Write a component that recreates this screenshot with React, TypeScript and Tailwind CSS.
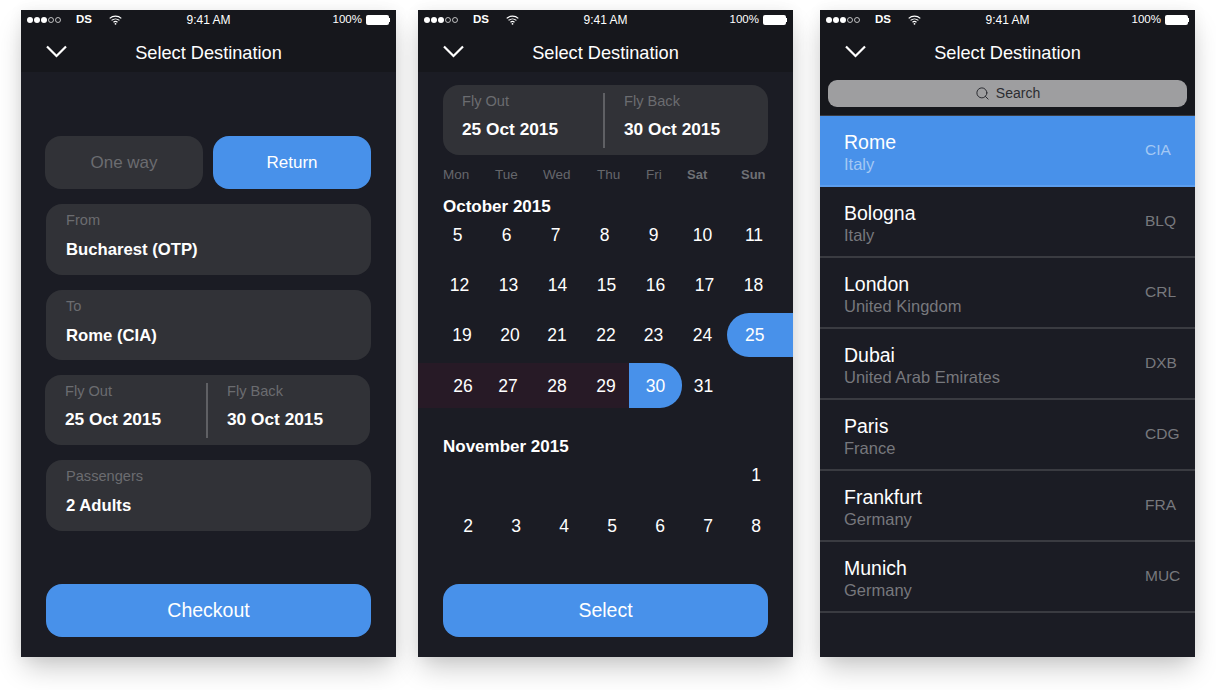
import { Search } from "lucide-react";

const font = { fontFamily: '"Liberation Sans", Arial, sans-serif' };

function StatusBar() {
  return (
    <div className="flex h-5 items-center justify-between pl-[6px] pr-[6px] text-[12px] text-white">
      <div className="flex flex-1 items-center">
        <div className="flex gap-[1px]">
          <span className="h-[6px] w-[6px] rounded-full bg-white" />
          <span className="h-[6px] w-[6px] rounded-full bg-white" />
          <span className="h-[6px] w-[6px] rounded-full bg-white" />
          <span className="h-[6px] w-[6px] rounded-full border border-white/70" />
          <span className="h-[6px] w-[6px] rounded-full border border-white/70" />
        </div>
        <span className="ml-[15px] text-[11.5px] font-bold">DS</span>
        <svg className="ml-[17px]" width="13" height="10" viewBox="0 0 13 10" fill="none" stroke="white" strokeWidth="1.2">
          <path d="M0.7 3.4C4 0.4 9 0.4 12.3 3.4" />
          <path d="M2.6 5.4C4.8 3.5 8.2 3.5 10.4 5.4" />
          <path d="M4.5 7.3C5.6 6.4 7.4 6.4 8.5 7.3" />
          <circle cx="6.5" cy="8.8" r="0.9" fill="white" stroke="none" />
        </svg>
      </div>
      <span className="text-[12px]">9:41 AM</span>
      <div className="flex flex-1 items-center justify-end">
        <span className="text-[11.5px]">100%</span>
        <span className="ml-1 h-[10px] w-[23px] rounded-[2px] bg-white" />
        <span className="h-[4px] w-[1px] bg-white" />
      </div>
    </div>
  );
}

function NavTitle() {
  return (
    <div className="relative flex h-[42px] items-center justify-center pt-[6px]">
      <svg
        className="absolute left-[25px] top-[15px]"
        width="21"
        height="13"
        viewBox="0 0 21 13"
        fill="none"
        stroke="white"
        strokeWidth="2.2"
      >
        <path d="M1 1.5L10.5 11L20 1.5" />
      </svg>
      <span className="text-[18.2px] text-white">Select Destination</span>
    </div>
  );
}

function Field({ label, value, className }: { label: string; value: string; className: string }) {
  return (
    <div className={`flex w-[325px] flex-col rounded-[16px] bg-[#313237] pl-[20px] pt-[6px] ${className}`}>
      <span className="text-[14.6px] leading-[20px] text-[#6b6c70]">{label}</span>
      <span className="mt-[10px] text-[16.7px] font-bold leading-[20px] text-white">{value}</span>
    </div>
  );
}

function DatesCard({ first }: { first: string }) {
  return (
    <div className="flex h-[70px] w-[325px] items-center rounded-[16px] bg-[#313237]">
      <div className={`flex h-full flex-col pt-[6px] ${first}`}>
        <span className="text-[14.6px] leading-[20px] text-[#6b6c70]">Fly Out</span>
        <span className="mt-[8px] text-[17.3px] font-bold leading-[20px] text-white">25 Oct 2015</span>
      </div>
      <div className="h-[55px] w-[2px] bg-[#5f6064]" />
      <div className="flex h-full flex-col pl-[19px] pt-[6px]">
        <span className="text-[14.6px] leading-[20px] text-[#6b6c70]">Fly Back</span>
        <span className="mt-[8px] text-[17.3px] font-bold leading-[20px] text-white">30 Oct 2015</span>
      </div>
    </div>
  );
}

function Day({ children, className = "" }: { children?: React.ReactNode; className?: string }) {
  return <div className={`flex items-center justify-center text-[17.5px] text-white ${className}`}>{children}</div>;
}

function Screen({ children }: { children: React.ReactNode }) {
  return (
    <div className="flex h-[647px] w-[375px] shrink-0 flex-col overflow-hidden bg-[#1b1c24] shadow-[0_14px_26px_-4px_rgba(0,0,0,0.22),0_0_14px_rgba(0,0,0,0.06)]">
      {children}
    </div>
  );
}

function Header() {
  return (
    <div className="bg-[#16171c]">
      <StatusBar />
      <NavTitle />
    </div>
  );
}

function BookingScreen() {
  return (
    <Screen>
      <Header />
      <div className="flex flex-1 flex-col pl-[25px] pt-[64px]">
        <div className="-ml-[1px] flex gap-[10px] pb-[15px]">
          <div className="flex h-[53px] w-[158px] items-center justify-center rounded-[16px] bg-[#313237] pt-[1px] text-[17px] text-[#6b6c70]">
            One way
          </div>
          <div className="flex h-[53px] w-[158px] items-center justify-center rounded-[16px] bg-[#4891ea] pt-[1px] text-[17px] text-white">
            Return
          </div>
        </div>
        <div className="flex flex-col gap-[15px]">
          <Field label="From" value="Bucharest (OTP)" className="h-[71px]" />
          <Field label="To" value="Rome (CIA)" className="h-[70px]" />
          <div className="-ml-[1px]">
            <DatesCard first="w-[161px] pl-[20px]" />
          </div>
          <Field label="Passengers" value="2 Adults" className="h-[71px]" />
        </div>
        <div className="mt-[53px] flex h-[53px] w-[325px] items-center justify-center rounded-[16px] bg-[#4891ea] pt-[1px] text-[19.5px] text-white">
          Checkout
        </div>
      </div>
    </Screen>
  );
}

function CalendarScreen() {
  return (
    <Screen>
      <Header />
      <div className="flex flex-1 flex-col">
        <div className="pl-[25px] pt-[13px]">
          <DatesCard first="w-[160px] pl-[19px]" />
        </div>
        <div className="mt-[10px] flex h-[20px] items-center pl-[25px] text-[13.5px] text-[#66676c]">
          <span className="w-[52px]">Mon</span>
          <span className="w-[48px]">Tue</span>
          <span className="w-[54px]">Wed</span>
          <span className="w-[49px]">Thu</span>
          <span className="w-[41px]">Fri</span>
          <span className="w-[54px] text-[13px] font-bold text-[#6f7075]">Sat</span>
          <span className="text-[13px] font-bold text-[#6f7075]">Sun</span>
        </div>
        <div className="mt-[12px] pl-[25px] text-[17px] font-bold leading-[20px] text-white">October 2015</div>

        <div className="mt-[-4px] flex h-[45px] pl-[15px]">
          <Day className="w-[49px]">5</Day>
          <Day className="w-[49px]">6</Day>
          <Day className="w-[49px]">7</Day>
          <Day className="w-[49px]">8</Day>
          <Day className="w-[49px]">9</Day>
          <Day className="w-[49px]">10</Day>
          <Day className="w-[49px] pl-[5px]">11</Day>
        </div>
        <div className="mt-[5px] flex h-[45px] pl-[17px]">
          <Day className="w-[49px]">12</Day>
          <Day className="w-[49px]">13</Day>
          <Day className="w-[49px]">14</Day>
          <Day className="w-[49px]">15</Day>
          <Day className="w-[49px]">16</Day>
          <Day className="w-[49px]">17</Day>
          <Day className="w-[49px]">18</Day>
        </div>
        <div className="mt-[5px] flex h-[44px] pl-[15px]">
          <Day className="w-[49px] pl-[9px] pt-[1px]">19</Day>
          <Day className="w-[49px] pl-[7px] pt-[1px]">20</Day>
          <Day className="w-[49px] pl-[3px] pt-[1px]">21</Day>
          <Day className="w-[49px] pl-[3px] pt-[1px]">22</Day>
          <Day className="w-[49px] pt-[1px]">23</Day>
          <Day className="w-[49px] pt-[1px]">24</Day>
          <Day className="w-[66px] justify-start rounded-l-[22px] bg-[#4891ea] pl-[18px] pt-[1px]">25</Day>
        </div>
        <div className="mt-[6px] flex h-[45px]">
          <div className="flex w-[211px] bg-[#271a26] pl-[15px]">
            <Day className="w-[49px] pl-[11px] pt-[1px]">26</Day>
            <Day className="w-[49px] pl-[3px] pt-[1px]">27</Day>
            <Day className="w-[49px] pl-[3px] pt-[1px]">28</Day>
            <Day className="w-[49px] pl-[3px] pt-[1px]">29</Day>
          </div>
          <Day className="w-[53px] rounded-r-[22px] bg-[#4891ea] pt-[1px]">30</Day>
          <Day className="w-[43px] pt-[1px]">31</Day>
        </div>

        <div className="mt-[29px] pl-[25px] text-[17px] font-bold leading-[20px] text-white">November 2015</div>
        <div className="mt-[-4px] flex h-[45px] justify-end pr-[28px]">
          <Day className="w-[18px]">1</Day>
        </div>
        <div className="mt-[6px] flex h-[45px] pl-[26px]">
          {[2, 3, 4, 5, 6, 7, 8].map((d) => (
            <Day key={d} className="w-[48px]">
              {d}
            </Day>
          ))}
        </div>
        <div className="ml-[25px] mt-[35px] flex h-[53px] w-[325px] items-center justify-center rounded-[16px] bg-[#4891ea] pt-[1px] text-[19.5px] text-white">
          Select
        </div>
      </div>
    </Screen>
  );
}

const airports = [
  { city: "Rome", country: "Italy", code: "CIA" },
  { city: "Bologna", country: "Italy", code: "BLQ" },
  { city: "London", country: "United Kingdom", code: "CRL" },
  { city: "Dubai", country: "United Arab Emirates", code: "DXB" },
  { city: "Paris", country: "France", code: "CDG" },
  { city: "Frankfurt", country: "Germany", code: "FRA" },
  { city: "Munich", country: "Germany", code: "MUC" },
];

function AirportRow({ city, country, code, active }: { city: string; country: string; code: string; active: boolean }) {
  return (
    <div
      className={`flex h-[71px] items-center justify-between border-b-2 pl-[24px] ${
        active ? "border-[#5c9eee] bg-[#4891ea]" : "border-[#3a3b41]"
      }`}
    >
      <div className="flex flex-col pt-[3px]">
        <span className="text-[19.5px] leading-[24px] text-white">{city}</span>
        <span className={`text-[16.5px] leading-[21px] ${active ? "text-[#a3c8f4]" : "text-[#77787d]"}`}>{country}</span>
      </div>
      <span className={`w-[50px] pb-[2px] text-[15.5px] ${active ? "text-[#a3c8f4]" : "text-[#77787d]"}`}>{code}</span>
    </div>
  );
}

function AirportsScreen() {
  return (
    <Screen>
      <div className="bg-[#16171c]">
        <StatusBar />
        <NavTitle />
        <div className="mx-[8px] my-[8px] flex h-[27px] items-center justify-center gap-[6px] rounded-[9px] bg-[#9e9ea0] text-[14px] text-[#2b2c31]">
          <Search size={15} strokeWidth={1.6} />
          <span>Search</span>
        </div>
      </div>
      <div className="border-t border-[#3a3b41]">
        {airports.map((a, i) => (
          <AirportRow key={a.city} {...a} active={i === 0} />
        ))}
      </div>
    </Screen>
  );
}

export default function App() {
  return (
    <div className="flex h-[690px] w-[1216px] overflow-hidden bg-white pl-[21px] pt-[10px]" style={font}>
      <BookingScreen />
      <div className="w-[22px] shrink-0" />
      <CalendarScreen />
      <div className="w-[27px] shrink-0" />
      <AirportsScreen />
    </div>
  );
}
